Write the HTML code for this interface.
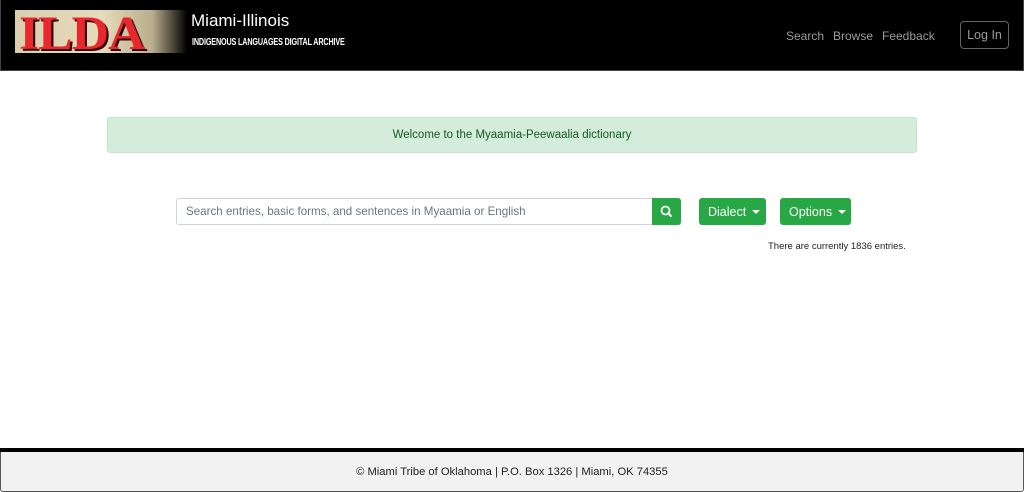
<!DOCTYPE html>
<html><head><meta charset="utf-8"><style>
*{box-sizing:border-box;margin:0;padding:0}
body{width:1024px;height:492px;background:#fff;font-family:"Liberation Sans",sans-serif;position:relative;overflow:hidden}
.nav{position:absolute;left:0;top:0;width:1024px;height:71px;background:#000;border:1px solid #444;border-top:none}
.logo{position:absolute;left:14px;top:10px;width:172px;height:43px;background:linear-gradient(90deg,#d9cfae 0%,#e6dcbc 50%,#b8ad8c 80%,#000 100%);overflow:hidden}
.logo span{position:absolute;left:4px;top:-4px;font-family:"Liberation Serif",serif;font-weight:bold;font-size:48px;color:#e8282c;letter-spacing:-1px;text-shadow:2px 2px 0 #300;transform:scaleX(1.08);transform-origin:left}
.t1{position:absolute;left:190px;top:11px;color:#fff;font-size:17px}
.t2{position:absolute;left:191px;top:37px;color:#fff;font-size:10px;font-weight:bold;transform:scaleX(.72);transform-origin:left;letter-spacing:-.2px;white-space:nowrap}
.links{position:absolute;top:29px;font-size:12px;color:#9a9a9a}
.login{position:absolute;left:959px;top:21px;width:49px;height:28px;border:1px solid #666;border-radius:4px;color:#9a9a9a;font-size:12.5px;text-align:center;line-height:26px}
.alert{position:absolute;left:107px;top:117px;width:810px;height:36px;background:#d4edda;border:1px solid #c3e6cb;border-radius:3px;color:#155724;font-size:11.5px;text-align:center;line-height:34px}
.search{position:absolute;left:176px;top:198px;width:477px;height:27px;border:1px solid #ced4da;border-right:none;border-radius:3px 0 0 3px;font-size:11.6px;color:#6c757d;padding-left:9px;line-height:26px}
.sbtn{position:absolute;left:652px;top:198px;width:29px;height:27px;background:#28a745;border-radius:0 3px 3px 0}
.btn{position:absolute;top:198px;height:27px;background:#28a745;border-radius:3px;color:#fff;font-size:12.5px;line-height:28px;padding-left:9px}
.caret{display:inline-block;border-left:4px solid transparent;border-right:4px solid transparent;border-top:4px solid #fff;vertical-align:2px;margin-left:6px}
.count{position:absolute;left:768px;top:241px;font-size:9.5px;color:#222}
.fbar{position:absolute;left:0;top:448px;width:1024px;height:4px;background:#000}
.foot{position:absolute;left:0;top:452px;width:1024px;height:40px;background:#f2f2f2;border:1px solid #555;border-top:none;border-radius:0 0 3px 3px}
.foot div{position:absolute;left:0;width:100%;top:14px;text-align:center;font-size:11.2px;color:#222}
</style></head><body>
<div class="nav">
<div class="logo"><span>ILDA</span></div>
<div class="t1">Miami-Illinois</div>
<div class="t2">INDIGENOUS LANGUAGES DIGITAL ARCHIVE</div>
<div class="links" style="left:785px">Search</div>
<div class="links" style="left:832px">Browse</div>
<div class="links" style="left:881px">Feedback</div>
<div class="login">Log In</div>
</div>
<div class="alert">Welcome to the Myaamia-Peewaalia dictionary</div>
<div class="search">Search entries, basic forms, and sentences in Myaamia or English</div>
<div class="sbtn"><svg width="29" height="27" viewBox="0 0 29 27"><circle cx="13.5" cy="12.5" r="4" fill="none" stroke="#fff" stroke-width="1.8"/><line x1="16.5" y1="15.5" x2="19" y2="18" stroke="#fff" stroke-width="2" stroke-linecap="round"/></svg></div>
<div class="btn" style="left:699px;width:67px">Dialect<span class="caret"></span></div>
<div class="btn" style="left:780px;width:71px">Options<span class="caret"></span></div>
<div class="count">There are currently 1836 entries.</div>
<div class="fbar"></div>
<div class="foot"><div>© Miami Tribe of Oklahoma | P.O. Box 1326 | Miami, OK 74355</div></div>
</body></html>
